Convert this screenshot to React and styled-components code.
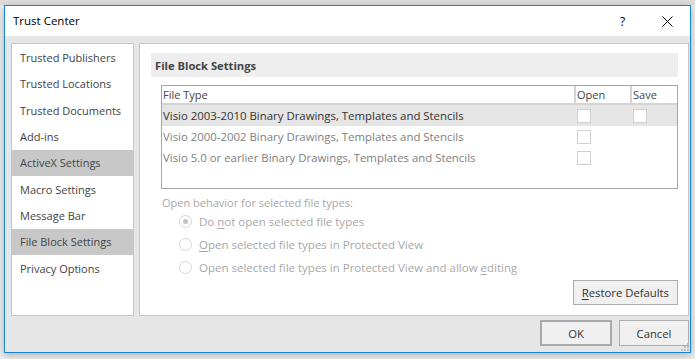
import React from "react";
import styled, { createGlobalStyle } from "styled-components";

const Global = createGlobalStyle`
  html, body { margin: 0; padding: 0; }
  body {
    background: #e9e9e9;
    font-family: "Open Sans", "Noto Sans", "Liberation Sans", sans-serif;
    font-size: 11px;
    width: 695px;
    height: 359px;
    overflow: hidden;
  }
`;

const Desktop = styled.div`
  width: 695px;
  height: 359px;
  padding: 5px 0 0 4px;
  box-sizing: border-box;
  background: linear-gradient(#dedede 0, #dedede 5px, #eeeeee 5px);
`;

const Window = styled.div`
  width: 687px;
  height: 348px;
  box-sizing: border-box;
  border: 1px solid #1883d7;
  background: #e6e6e6;
  box-shadow: 0 2px 8px rgba(0, 0, 0, 0.28);
  display: flex;
  flex-direction: column;
  position: relative;
`;

const TitleBar = styled.div`
  height: 30px;
  background: #ffffff;
  display: flex;
  align-items: center;
  padding-left: 8px;
  flex-shrink: 0;
`;

const Title = styled.div`
  flex: 1;
  font-size: 11.5px;
  color: #000;
  padding-bottom: 1px;
`;

const TitleButton = styled.div`
  width: 45px;
  height: 30px;
  display: flex;
  align-items: center;
  justify-content: center;
  color: #000;
  font-size: 12px;
`;

const Body = styled.div`
  flex: 1;
  display: flex;
  flex-direction: column;
  padding: 7px 1px 6px 6px;
  min-height: 0;
`;

const Panels = styled.div`
  display: flex;
  gap: 5px;
  height: 275px;
`;

const Nav = styled.div`
  width: 123px;
  box-sizing: border-box;
  background: #fff;
  border: 1px solid #c6c6c6;
  padding-top: 0.5px;
`;

const NavItem = styled.div`
  height: 26.3px;
  display: flex;
  align-items: center;
  padding-left: 8px;
  color: #444;
  font-size: 11px;
  background: ${(p) => (p.$selected ? "#c8c8c8" : "transparent")};
`;

const Content = styled.div`
  flex: 1;
  box-sizing: border-box;
  background: #fff;
  border: 1px solid #c6c6c6;
  padding: 9px 10px 10px 11px;
  display: flex;
  flex-direction: column;
`;

const SectionHeader = styled.div`
  height: 24px;
  background: #eeeeee;
  display: flex;
  align-items: center;
  padding-left: 4px;
  font-weight: 700;
  color: #444;
  font-size: 11.2px;
`;

const Table = styled.div`
  margin: 8px 0 0 10px;
  height: 104px;
  box-sizing: border-box;
  border: 1px solid #a6a6a6;
  display: flex;
  flex-direction: column;
`;

const Row = styled.div`
  display: grid;
  grid-template-columns: 414px 56px 1fr;
  height: ${(p) => (p.$head ? "19px" : "21px")};
  align-items: center;
  font-size: ${(p) => (p.$head ? "11px" : "11.4px")};
  background: ${(p) => (p.$active ? "#e5e5e5" : "transparent")};
  color: ${(p) => (p.$active ? "#333" : "#808080")};
`;

const HeadCell = styled.div`
  height: 100%;
  box-sizing: border-box;
  border-right: 2px solid #d4d4d4;
  border-bottom: 2px solid #d4d4d4;
  display: flex;
  align-items: center;
  padding-left: 1px;
  color: #444;
  &:last-child { border-right: 0; }
`;

const Cell = styled.div`
  display: flex;
  align-items: center;
  padding-left: 1px;
  white-space: nowrap;
`;

const Check = styled.span`
  width: 12px;
  height: 12px;
  border: 1px solid #cfcfcf;
  background: #fff;
  display: inline-block;
`;

const Caption = styled.div`
  margin: 7px 0 0 11px;
  color: #a8a8a8;
  height: 14px;
  line-height: 14px;
`;

const RadioList = styled.div`
  display: flex;
  flex-direction: column;
  margin: 0 0 0 28px;
`;

const RadioRow = styled.div`
  height: 23px;
  display: flex;
  align-items: center;
  gap: 7px;
  color: #a8a8a8;
  font-size: 11.5px;
`;

const RadioCircle = styled.span`
  width: 11px;
  height: 11px;
  border-radius: 50%;
  border: 1px solid #d6d6d6;
  background: #fff;
  display: inline-flex;
  align-items: center;
  justify-content: center;
  &::after {
    content: "";
    width: 5px;
    height: 5px;
    border-radius: 50%;
    background: ${(p) => (p.$on ? "#c2c2c2" : "transparent")};
  }
`;

const Key = styled.span`
  text-decoration: underline;
  text-underline-offset: 2px;
`;

const ContentFooter = styled.div`
  margin-top: auto;
  display: flex;
  justify-content: flex-end;
`;

const Button = styled.div`
  box-sizing: border-box;
  height: ${(p) => p.$h || 25}px;
  min-width: ${(p) => p.$w}px;
  padding: 0 8px;
  background: #f0f0f0;
  border: ${(p) => (p.$default ? "2px solid #a8a8a8" : "1px solid #adadad")};
  display: flex;
  align-items: center;
  justify-content: center;
  color: #333;
  font-size: 11.3px;
`;

const Footer = styled.div`
  display: flex;
  justify-content: flex-end;
  gap: 7px;
  margin-top: 4px;
`;

const Grip = styled.svg`
  position: absolute;
  right: 1px;
  bottom: 1px;
`;

const navItems = [
  "Trusted Publishers",
  "Trusted Locations",
  "Trusted Documents",
  "Add-ins",
  "ActiveX Settings",
  "Macro Settings",
  "Message Bar",
  "File Block Settings",
  "Privacy Options",
];

const rows = [
  { name: "Visio 2003-2010 Binary Drawings, Templates and Stencils", save: true, active: true },
  { name: "Visio 2000-2002 Binary Drawings, Templates and Stencils", save: false },
  { name: "Visio 5.0 or earlier Binary Drawings, Templates and Stencils", save: false },
];

export default function App() {
  return (
    <>
      <Global />
      <Desktop>
        <Window>
          <TitleBar>
            <Title>Trust Center</Title>
            <TitleButton>?</TitleButton>
            <TitleButton>
              <svg width="11" height="11" viewBox="0 0 11 11">
                <path d="M0.5 0.5 L10.5 10.5 M10.5 0.5 L0.5 10.5" stroke="#000" strokeWidth="1" />
              </svg>
            </TitleButton>
          </TitleBar>
          <Body>
            <Panels>
              <Nav>
                {navItems.map((n) => (
                  <NavItem key={n} $selected={n === "ActiveX Settings" || n === "File Block Settings"}>
                    {n}
                  </NavItem>
                ))}
              </Nav>
              <Content>
                <SectionHeader>File Block Settings</SectionHeader>
                <Table>
                  <Row $head>
                    <HeadCell>File Type</HeadCell>
                    <HeadCell>Open</HeadCell>
                    <HeadCell>Save</HeadCell>
                  </Row>
                  {rows.map((r) => (
                    <Row key={r.name} $active={r.active}>
                      <Cell>{r.name}</Cell>
                      <Cell>
                        <Check />
                      </Cell>
                      <Cell>{r.save && <Check />}</Cell>
                    </Row>
                  ))}
                </Table>
                <Caption>Open behavior for selected file types:</Caption>
                <RadioList>
                  <RadioRow>
                    <RadioCircle $on />
                    <span>
                      Do <Key>n</Key>ot open selected file types
                    </span>
                  </RadioRow>
                  <RadioRow>
                    <RadioCircle />
                    <span>
                      <Key>O</Key>pen selected file types in Protected View
                    </span>
                  </RadioRow>
                  <RadioRow>
                    <RadioCircle />
                    <span>
                      Open selected file types in Protected View and allow <Key>e</Key>diting
                    </span>
                  </RadioRow>
                </RadioList>
                <ContentFooter>
                  <Button $w={105} $h={25}>
                    <span>
                      <Key>R</Key>estore Defaults
                    </span>
                  </Button>
                </ContentFooter>
              </Content>
            </Panels>
            <Footer>
              <Button $w={72} $h={26} $default>
                OK
              </Button>
              <Button $w={70} $h={26}>
                Cancel
              </Button>
            </Footer>
          </Body>
          <Grip width="8" height="8" viewBox="0 0 8 8">
            {[
              [6, 0],
              [6, 3],
              [3, 3],
              [6, 6],
              [3, 6],
              [0, 6],
            ].map(([x, y]) => (
              <rect key={`${x}-${y}`} x={x} y={y} width="2" height="2" fill="#bdbdbd" />
            ))}
          </Grip>
        </Window>
      </Desktop>
    </>
  );
}
